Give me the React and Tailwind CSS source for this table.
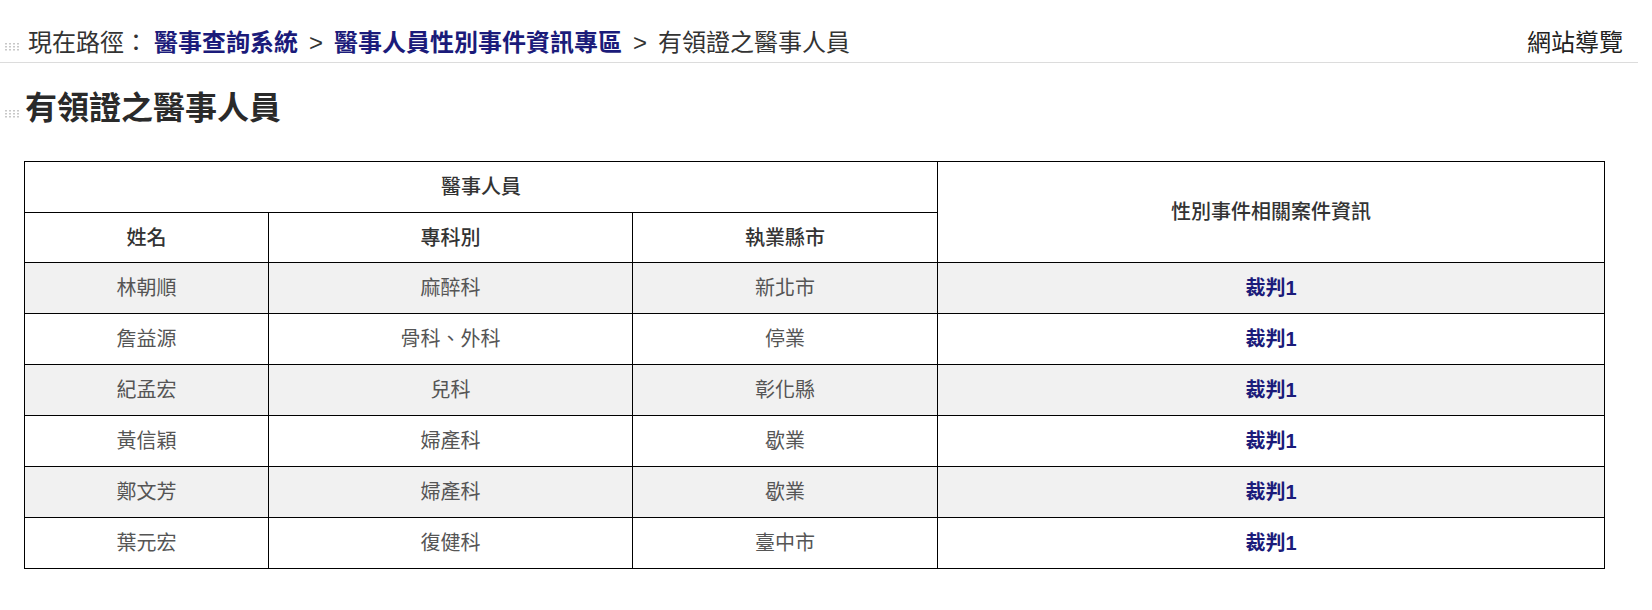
import React from 'react';

const rows = [
  { name: '林朝順', dept: '麻醉科', city: '新北市' },
  { name: '詹益源', dept: '骨科、外科', city: '停業' },
  { name: '紀孟宏', dept: '兒科', city: '彰化縣' },
  { name: '黃信穎', dept: '婦產科', city: '歇業' },
  { name: '鄭文芳', dept: '婦產科', city: '歇業' },
  { name: '葉元宏', dept: '復健科', city: '臺中市' },
];

const Dots = ({ className }) => (
  <svg width="16" height="10" viewBox="0 0 16 10" className={className}>
    {[0, 1, 2].map((r) =>
      [0, 1, 2, 3].map((c) => (
        <rect key={r + '-' + c} x={c * 4 + 1} y={r * 3 + 1} width="2" height="1.5" fill="#c8c8c8" />
      ))
    )}
  </svg>
);

const Sep = () => <span className="mx-[11px] text-[#333]">&gt;</span>;

export default function App() {
  return (
    <div className="w-[1652px] min-h-[610px] bg-white font-['Liberation_Sans','Noto_Sans_CJK_TC',sans-serif] text-[#333]">
      {/* 路徑列 */}
      <div className="w-[1638px] flex items-center justify-between pt-[27px] pb-[3px] border-b border-[#dcdcdc] pr-[15px]">
        <div className="flex items-center text-[24px] leading-[32px]">
          <Dots className="ml-[4px] mr-[8px] mt-[8px]" />
          <span>現在路徑：</span>
          <a href="#" className="ml-[6px] font-bold text-[#1b1b7a]">醫事查詢系統</a>
          <Sep />
          <a href="#" className="font-bold text-[#1b1b7a]">醫事人員性別事件資訊專區</a>
          <Sep />
          <span>有領證之醫事人員</span>
        </div>
        <a href="#" className="text-[24px] leading-[32px] text-[#222]">網站導覽</a>
      </div>

      {/* 標題 */}
      <h1 className="mt-[25px] flex items-center text-[32px] leading-[40px] font-bold text-[#2a2a2a]">
        <Dots className="ml-[4px] mr-[5px] mt-[12px]" />
        有領證之醫事人員
      </h1>

      {/* 表格 */}
      <table className="mt-[33px] ml-[24px] w-[1581px] border-collapse text-[20px] text-center">
        <colgroup>
          <col className="w-[244px]" />
          <col className="w-[364px]" />
          <col className="w-[305px]" />
          <col />
        </colgroup>
        <thead>
          <tr className="h-[51px]">
            <th colSpan={3} className="border border-black font-medium text-[#333]">醫事人員</th>
            <th rowSpan={2} className="border border-black font-medium text-[#333]">性別事件相關案件資訊</th>
          </tr>
          <tr className="h-[50px]">
            <th className="border border-black font-medium text-[#333]">姓名</th>
            <th className="border border-black font-medium text-[#333]">專科別</th>
            <th className="border border-black font-medium text-[#333]">執業縣市</th>
          </tr>
        </thead>
        <tbody>
          {rows.map((r, i) => (
            <tr key={r.name} className={i % 2 === 0 ? 'h-[51px] bg-[#f1f1f1]' : 'h-[51px] bg-white'}>
              <td className="border border-black text-[#555]">{r.name}</td>
              <td className="border border-black text-[#555]">{r.dept}</td>
              <td className="border border-black text-[#555]">{r.city}</td>
              <td className="border border-black">
                <a href="#" className="font-bold text-[#1b1b7a]">裁判1</a>
              </td>
            </tr>
          ))}
        </tbody>
      </table>
    </div>
  );
}
